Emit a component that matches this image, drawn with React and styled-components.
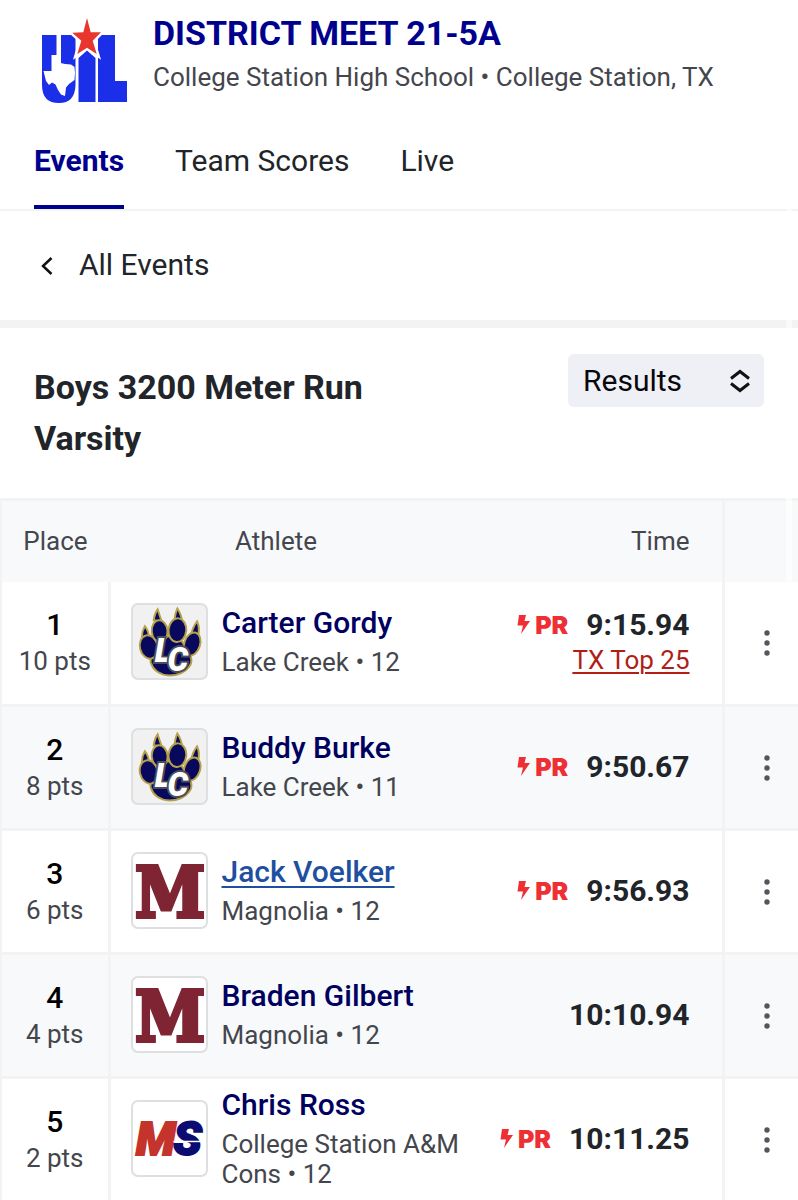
import React, { useState } from 'react';
import styled, { createGlobalStyle } from 'styled-components';

const colors = {
  navy: '#00008f',
  name: '#00005f',
  link: '#1f4fa0',
  text: '#212529',
  muted: '#44464d',
  red: '#ee2f33',
  darkRed: '#b01e17',
  line: '#f3f3f4',
  stripe: '#f7f9fb',
};

const results = [
  { place: 1, points: 10, name: 'Carter Gordy', school: 'Lake Creek', grade: 12, logo: 'paw', pr: true, time: '9:15.94', rank: 'TX Top 25' },
  { place: 2, points: 8, name: 'Buddy Burke', school: 'Lake Creek', grade: 11, logo: 'paw', pr: true, time: '9:50.67' },
  { place: 3, points: 6, name: 'Jack Voelker', school: 'Magnolia', grade: 12, logo: 'magnolia', pr: true, time: '9:56.93', active: true },
  { place: 4, points: 4, name: 'Braden Gilbert', school: 'Magnolia', grade: 12, logo: 'magnolia', time: '10:10.94' },
  { place: 5, points: 2, name: 'Chris Ross', school: 'College Station A&M Cons', grade: 12, logo: 'cons', pr: true, time: '10:11.25' },
];

const MeetLogo = () => (
  <svg width="88" height="88" viewBox="0 0 88 88" role="img" aria-label="UIL">
    <g fill="#1c2fe8">
      <path d="M1 20H15.500V50H20V20H34.500V70Q34 88 18 88Q1 88 1 70Z" />
      <path d="M57 20H74V66H86V87H57Z" />
    </g>
    <path
      d="M46 3L49.700 17.300H60L51.700 25.700L55.700 39L46 32.700L36.300 39L40.300 25.700L31.300 17.700L42.300 17.300Z"
      fill="#e8352e"
      stroke="#fff"
      strokeWidth="5"
      paintOrder="stroke"
    />
    <path d="M37.500 43L46 35.500L54.500 43V87H37.500Z" fill="#1c2fe8" />
    <path
      d="M10.500 40H19.700V48L24 49L30 49.500L33.500 52L34 58L33.500 65L28 69L25 72.500L24 81L20 79.500L17 75L14.500 69.500L11 67.500L8 70L5 66L2.500 56H10.500Z"
      fill="#fff"
    />
  </svg>
);

const PawLogo = () => (
  <svg width="74" height="74" viewBox="0 0 74 74" aria-hidden="true">
    <g fill="#08085c" stroke="#b5a14a" strokeWidth="2">
      <path d="M9 32Q9 26 12 21Q16 26 16 32Z" />
      <path d="M21 15Q22 8 25 4Q27 10 29 16Z" />
      <path d="M42 15Q43 7 45 3Q49 9 50 17Z" />
      <path d="M59 29Q61 21 65 16Q68 23 66 30Z" />
      <path d="M18 58Q16 48 25 41L30 32L41 31L50 37L56 47Q62 56 57 62Q50 71 37 71Q22 70 18 58Z" />
      <ellipse cx="16" cy="42" rx="9" ry="12" transform="rotate(-14 16 42)" />
      <ellipse cx="27" cy="26" rx="8" ry="11" transform="rotate(-5 27 26)" />
      <ellipse cx="45" cy="25" rx="9" ry="12" transform="rotate(5 45 25)" />
      <ellipse cx="60" cy="39" rx="8" ry="12" transform="rotate(18 60 39)" />
    </g>
    <g
      fill="#fff"
      stroke="#4b4c58"
      strokeWidth="4"
      paintOrder="stroke"
      fontFamily="Roboto, sans-serif"
      fontWeight="900"
      fontStyle="italic"
      fontSize="33"
    >
      <text x="22" y="57">L</text>
      <text x="35" y="66">C</text>
    </g>
  </svg>
);

const MagnoliaLogo = () => (
  <svg width="74" height="74" viewBox="0 0 74 74" overflow="visible" aria-hidden="true">
    <text
      x="37"
      y="63"
      textAnchor="middle"
      fill="#7f2433"
      stroke="#7f2433"
      strokeWidth="4"
      fontFamily="'DejaVu Serif Condensed', 'DejaVu Serif', serif"
      fontWeight="700"
      fontStretch="condensed"
      fontSize="70"
    >
      M
    </text>
  </svg>
);

const ConsLogo = () => (
  <svg width="74" height="74" viewBox="0 0 74 74" aria-hidden="true">
    <g fontFamily="Roboto, sans-serif" fontWeight="900" fontStyle="italic" fontSize="47" strokeWidth="2">
      <text x="3" y="53" fill="#c4342c" stroke="#c4342c">M</text>
      <text x="41" y="53" fill="#0b0b72" stroke="#0b0b72">S</text>
    </g>
    <path d="M41 39.500H72" stroke="#fff" strokeWidth="1.500" />
  </svg>
);

const teamLogos = { paw: PawLogo, magnolia: MagnoliaLogo, cons: ConsLogo };

const BoltIcon = () => (
  <svg width="13" height="19" viewBox="0 0 13 19" aria-hidden="true">
    <path d="M2 0H9L7.500 6H13L4 19L6 10.500H0.500Z" fill={colors.red} />
  </svg>
);

const ResultRow = ({ result }) => {
  const TeamLogo = teamLogos[result.logo];

  return (
    <Row>
      <PlaceCell>
        <Place>{result.place}</Place>
        <Points>{result.points} pts</Points>
      </PlaceCell>
      <td>
        <Athlete>
          <LogoBox $tinted={result.logo === 'paw'}>
            <TeamLogo />
          </LogoBox>
          <div>
            <AthleteName href="#athlete" $active={result.active}>
              {result.name}
            </AthleteName>
            <School>
              {result.school} • {result.grade}
            </School>
          </div>
        </Athlete>
      </td>
      <TimeCell>
        <Mark>
          {result.pr && (
            <Badge>
              <BoltIcon />
              PR
            </Badge>
          )}
          <Time>{result.time}</Time>
        </Mark>
        {result.rank && <Rank href="#rankings">{result.rank}</Rank>}
      </TimeCell>
      <MenuCell>
        <MenuButton type="button" aria-label={`Options for ${result.name}`}>
          <svg width="6" height="26" viewBox="0 0 6 26" fill="#55565c">
            <circle cx="3" cy="3" r="2.700" />
            <circle cx="3" cy="13" r="2.700" />
            <circle cx="3" cy="23" r="2.700" />
          </svg>
        </MenuButton>
      </MenuCell>
    </Row>
  );
};

export default function App() {
  const [view, setView] = useState('Results');

  return (
    <>
      <GlobalStyle />
      <ScrollThumb aria-hidden="true" />
      <Header>
        <MeetLogo />
        <div>
          <MeetTitle>DISTRICT MEET 21-5A</MeetTitle>
          <Venue>College Station High School • College Station, TX</Venue>
        </div>
      </Header>
      <Tabs>
        <Tab href="#events" $active>Events</Tab>
        <Tab href="#scores">Team Scores</Tab>
        <Tab href="#live">Live</Tab>
      </Tabs>
      <BackLink href="#all">
        <svg width="12" height="20" viewBox="0 0 12 20" fill="none" stroke="#111" strokeWidth="2.500" aria-hidden="true">
          <path d="M10.500 3L2 11L10.500 19" />
        </svg>
        All Events
      </BackLink>
      <EventBar>
        <EventTitle>
          Boys 3200 Meter Run
          <br />
          Varsity
        </EventTitle>
        <SelectWrap>
          <Select aria-label="View" value={view} onChange={(event) => setView(event.target.value)}>
            <option>Results</option>
            <option>Splits</option>
          </Select>
          <SelectIcon width="22" height="24" viewBox="0 0 22 24" fill="none" stroke="#111" strokeWidth="3" aria-hidden="true">
            <path d="M2 9.500L11 2.500L20 9.500M2 14.500L11 21.500L20 14.500" />
          </SelectIcon>
        </SelectWrap>
      </EventBar>
      <Table>
        <thead>
          <tr>
            <HeadCell $width="108px" $align="center">Place</HeadCell>
            <HeadCell $athlete>Athlete</HeadCell>
            <HeadCell $width="240px" $align="right">Time</HeadCell>
            <HeadCell $width="75px" $divider aria-label="Options" />
          </tr>
        </thead>
        <tbody>
          {results.map((result) => (
            <ResultRow key={result.place} result={result} />
          ))}
        </tbody>
      </Table>
    </>
  );
}

const GlobalStyle = createGlobalStyle`
  * {
    box-sizing: border-box;
  }
  body {
    margin: 0;
    background: #fff;
    color: ${colors.text};
    font-family: Roboto, 'Liberation Sans', sans-serif;
  }
`;

const ScrollThumb = styled.div`
  position: absolute;
  z-index: 1;
  top: 8px;
  right: 6px;
  width: 6px;
  height: 574px;
  border-radius: 3px;
  background: rgba(255, 255, 255, 0.6);
  pointer-events: none;
`;

const Header = styled.header`
  display: flex;
  gap: 24px;
  padding: 15px 40px 0 41px;
`;

const MeetTitle = styled.h1`
  margin: 0;
  color: ${colors.navy};
  font-size: 34px;
  line-height: 36px;
`;

const Venue = styled.p`
  margin: 8px 0 0;
  color: ${colors.muted};
  font-size: 26px;
  line-height: 36px;
`;

const Tabs = styled.nav`
  display: flex;
  gap: 51px;
  padding: 40px 34px 0;
  border-bottom: 2px solid ${colors.line};
`;

const Tab = styled.a`
  padding-bottom: 26px;
  border-bottom: 4px solid ${({ $active }) => ($active ? colors.navy : 'transparent')};
  color: ${({ $active }) => ($active ? colors.navy : colors.text)};
  font-size: 30px;
  font-weight: ${({ $active }) => ($active ? 700 : 400)};
  line-height: 36px;
  text-decoration: none;
`;

const BackLink = styled.a`
  display: flex;
  align-items: center;
  gap: 26px;
  padding: 36px 41px 37px;
  border-bottom: 8px solid ${colors.line};
  color: ${colors.text};
  font-size: 30px;
  line-height: 36px;
  text-decoration: none;
`;

const EventBar = styled.section`
  display: flex;
  align-items: flex-start;
  justify-content: space-between;
  padding: 26px 34px 34px;
`;

const EventTitle = styled.h2`
  margin: 8px 0 0;
  font-size: 34px;
  line-height: 51px;
`;

const SelectWrap = styled.div`
  position: relative;
`;

const Select = styled.select`
  appearance: none;
  width: 196px;
  height: 53px;
  padding: 0 15px;
  border: 0;
  border-radius: 6px;
  background: #efeff6;
  color: #08080c;
  font: 30px Roboto, sans-serif;
`;

const SelectIcon = styled.svg`
  position: absolute;
  top: 15px;
  right: 13px;
  pointer-events: none;
`;

const Table = styled.table`
  width: 100%;
  border-collapse: collapse;
  table-layout: fixed;
  border: solid ${colors.line};
  border-width: 3px 0 3px 2px;

  td {
    padding: 0;
  }
`;

const HeadCell = styled.th`
  width: ${({ $width }) => $width || 'auto'};
  height: 82px;
  padding: 0;
  padding-left: ${({ $athlete }) => ($athlete ? '126px' : '0')};
  padding-right: ${({ $align }) => ($align === 'right' ? '32px' : '0')};
  border-left: ${({ $divider }) => ($divider ? `3px solid ${colors.line}` : '0')};
  background: ${colors.stripe};
  color: ${colors.muted};
  font-size: 26px;
  font-weight: 400;
  text-align: ${({ $align }) => $align || 'left'};
`;

const Row = styled.tr`
  height: 124px;
  border-bottom: 3px solid ${colors.line};

  &:nth-child(even) {
    background: ${colors.stripe};
  }
`;

const PlaceCell = styled.td`
  border-right: 3px solid ${colors.line};
  text-align: center;
`;

const Place = styled.div`
  color: #000;
  font-size: 30px;
  font-weight: 500;
  line-height: 36px;
`;

const Points = styled.div`
  color: ${colors.muted};
  font-size: 26px;
  line-height: 36px;
`;

const Athlete = styled.div`
  display: flex;
  align-items: center;
  gap: 14px;
  padding: 0 0 2px 20px;
`;

const LogoBox = styled.div`
  display: flex;
  flex: none;
  width: 77px;
  height: 77px;
  border: 2px solid #dedfe1;
  border-radius: 7px;
  background: ${({ $tinted }) => ($tinted ? '#f1f1f1' : '#fff')};
`;

const AthleteName = styled.a`
  display: inline-block;
  color: ${({ $active }) => ($active ? colors.link : colors.name)};
  font-size: 30px;
  font-weight: 500;
  line-height: 36px;
  text-decoration: ${({ $active }) => ($active ? 'underline' : 'none')};
  text-decoration-thickness: 2px;
  text-underline-offset: 4px;
`;

const School = styled.div`
  margin: 6px 0 2px;
  color: ${colors.muted};
  font-size: 26px;
  line-height: 30px;
`;

const TimeCell = styled.td`
  && {
    padding: 0 32px 2px 0;
  }
  text-align: right;
`;

const Mark = styled.div`
  display: flex;
  align-items: center;
  justify-content: flex-end;
  gap: 18px;
`;

const Badge = styled.span`
  display: flex;
  align-items: center;
  gap: 5px;
  color: ${colors.red};
  font-family: Inter, sans-serif;
  font-size: 25px;
  font-weight: 900;
  line-height: 36px;
`;

const Time = styled.span`
  font-size: 30px;
  font-weight: 700;
  line-height: 36px;
`;

const Rank = styled.a`
  display: block;
  color: ${colors.darkRed};
  font-size: 26px;
  line-height: 34px;
  text-decoration-thickness: 2px;
  text-underline-offset: 3px;
`;

const MenuCell = styled.td`
  border-left: 3px solid ${colors.line};
  text-align: right;
`;

const MenuButton = styled.button`
  display: inline-flex;
  padding: 12px 28px;
  border: 0;
  background: none;
  cursor: pointer;
  vertical-align: middle;
`;
